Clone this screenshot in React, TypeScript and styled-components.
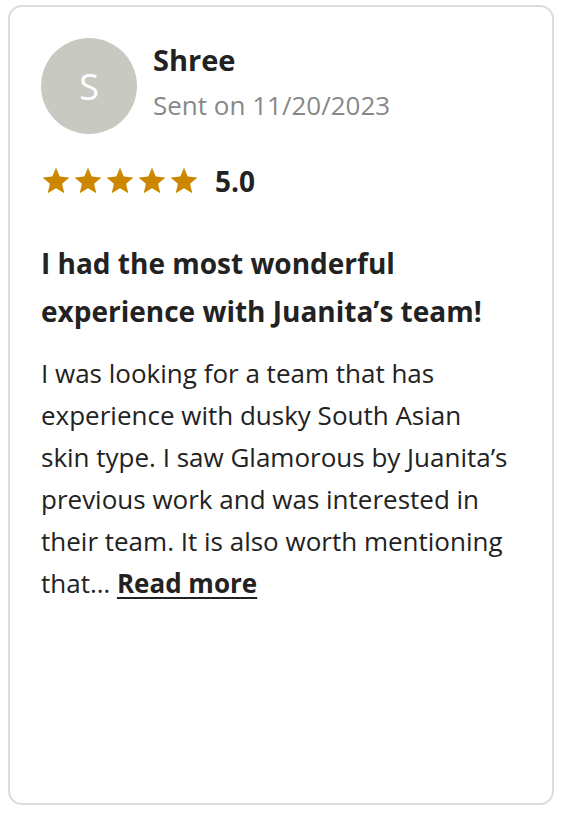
import { FC } from "react";
import styled, { createGlobalStyle } from "styled-components";

const GlobalStyle = createGlobalStyle`
  html, body {
    margin: 0;
    padding: 0;
    background: #fff;
  }
  body {
    font-family: "Open Sans", Lato, sans-serif;
    color: #222;
  }
`;

interface Review {
  name: string;
  sentOn: string;
  rating: number;
  title: string;
  body: string;
}

const review: Review = {
  name: "Shree",
  sentOn: "11/20/2023",
  rating: 5,
  title: "I had the most wonderful experience with Juanita’s team!",
  body:
    "I was looking for a team that has experience with dusky South Asian skin type. I saw Glamorous by Juanita’s previous work and was interested in their team. It is also worth mentioning that…",
};

const Star: FC = () => (
  <svg width="30" height="28" viewBox="0 0 24 23" aria-hidden>
    <path
      fill="#cb8700"
      d="M12 0.6l3.1 7.3 7.9 0.7-6 5.2 1.8 7.8L12 17.5 5.2 21.6 7 13.8 1 8.6l7.9-0.7z"
    />
  </svg>
);

export const ReviewCard: FC<{ review: Review }> = ({ review }) => (
  <Card>
    <Header>
      <Avatar>{review.name.charAt(0)}</Avatar>
      <Meta>
        <Name>{review.name}</Name>
        <SentOn>Sent on {review.sentOn}</SentOn>
      </Meta>
    </Header>
    <RatingRow>
      <Stars>
        {Array.from({ length: review.rating }).map((_, i) => (
          <Star key={i} />
        ))}
      </Stars>
      <Score>{review.rating.toFixed(1)}</Score>
    </RatingRow>
    <Title>{review.title}</Title>
    <Body>
      {review.body} <ReadMore href="#">Read more</ReadMore>
    </Body>
  </Card>
);

export default function App() {
  return (
    <>
      <GlobalStyle />
      <Page>
        <ReviewCard review={review} />
      </Page>
    </>
  );
}

const Page = styled.div`
  padding: 5px 8px 9px 8px;
`;

const Card = styled.div`
  box-sizing: border-box;
  width: 546px;
  height: 800px;
  border: 2px solid #dcdcdc;
  border-radius: 14px;
  padding: 31px 40px 0 31px;
`;

const Header = styled.div`
  display: flex;
  align-items: flex-start;
  gap: 16px;
`;

const Avatar = styled.div`
  width: 96px;
  height: 96px;
  flex: none;
  border-radius: 50%;
  background: #c8c9c1;
  color: #fff;
  font-size: 36px;
  display: flex;
  align-items: center;
  justify-content: center;
`;

const Meta = styled.div`
  display: flex;
  flex-direction: column;
  padding-top: 2px;
`;

const Name = styled.div`
  font-size: 29px;
  font-weight: 700;
  line-height: 40px;
`;

const SentOn = styled.div`
  margin-top: 5px;
  font-size: 26px;
  color: #888;
  line-height: 40px;
  white-space: nowrap;
`;

const RatingRow = styled.div`
  display: flex;
  align-items: center;
  gap: 16px;
  margin-top: 28px;
`;

const Stars = styled.div`
  display: flex;
  gap: 2px;
`;

const Score = styled.span`
  font-size: 28px;
  font-weight: 700;
`;

const Title = styled.h2`
  margin: 39px 0 0;
  font-size: 28px;
  font-weight: 700;
  line-height: 48px;
`;

const Body = styled.p`
  margin: 17px 0 0;
  font-size: 26px;
  line-height: 42px;
`;

const ReadMore = styled.a`
  color: #222;
  font-weight: 700;
  text-decoration: underline;
  text-underline-offset: 4px;
  text-decoration-thickness: 2px;
`;
